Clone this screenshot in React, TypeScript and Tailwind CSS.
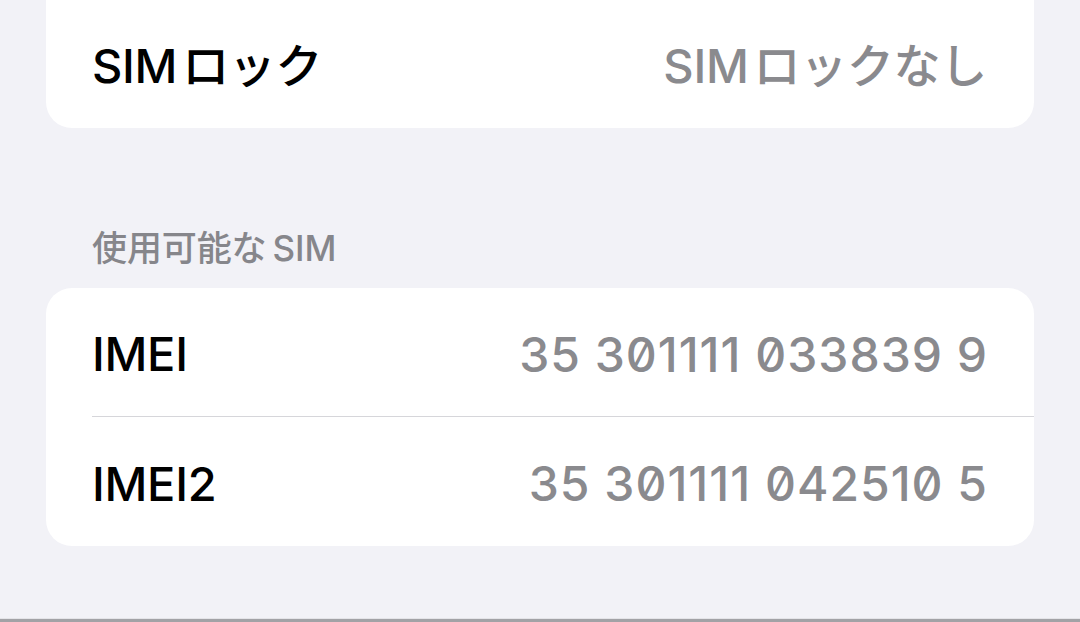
import React from "react";

const latin = "font-['Inter','Noto_Sans_CJK_JP',sans-serif]";

// iOS puts a small gap where Latin letters meet kana/kanji
function Spaced({ text, gap }: { text: string; gap: string }) {
  const parts = text.match(/[A-Za-z0-9 ]+|[^A-Za-z0-9 ]+/g) ?? [text];
  return (
    <>
      {parts.map((p, i) => (
        <span key={i} className={i > 0 ? gap : ""}>
          {p}
        </span>
      ))}
    </>
  );
}

function Row({ label, value, mono, h = "h-[128px]" }: { label: string; value: string; mono?: boolean; h?: string }) {
  return (
    <div className={`flex ${h} items-center justify-between pl-[46px] pr-[47px] pt-[5px]`}>
      <span className={`${latin} text-[47px] font-medium tracking-[-0.3px] text-black`}>
        <Spaced text={label} gap="ml-[5px]" />
      </span>
      {mono ? (
        <span className={`${latin} -mr-[1px] text-[48px] font-medium tracking-[1px] text-[#8a8a8e] [font-feature-settings:'zero']`}>
          {value}
        </span>
      ) : (
        <span className={`${latin} text-[47px] font-medium tracking-[-0.3px] text-[#8a8a8e]`}>
          <Spaced text={value} gap="ml-[5px]" />
        </span>
      )}
    </div>
  );
}

export default function App() {
  return (
    <div className="flex h-[622px] flex-col overflow-hidden bg-[#f2f2f7]">
      <div className="flex-1 px-[46px]">
        {/* SIM lock card, top edge scrolled off */}
        <div className="-mt-[40px] rounded-[26px] bg-white pt-[40px]">
          <Row label="SIMロック" value="SIMロックなし" />
        </div>

        <div className={`${latin} pl-[46px] pt-[98px] pb-[18px] text-[35px] font-medium leading-[44px] tracking-[-0.1px] text-[#86868b]`}>
          <Spaced text="使用可能なSIM" gap="ml-[6px]" />
        </div>

        <div className="rounded-[26px] bg-white">
          <Row label="IMEI" value="35 301111 033839 9" mono />
          <div className="ml-[46px] h-px bg-[#d6d6da]" />
          <Row label="IMEI2" value="35 301111 042510 5" mono h="h-[129px]" />
        </div>
      </div>
      <div className="h-px bg-[#e4e4e8]" />
      <div className="h-[3px] bg-[#a2a2a6]" />
    </div>
  );
}
